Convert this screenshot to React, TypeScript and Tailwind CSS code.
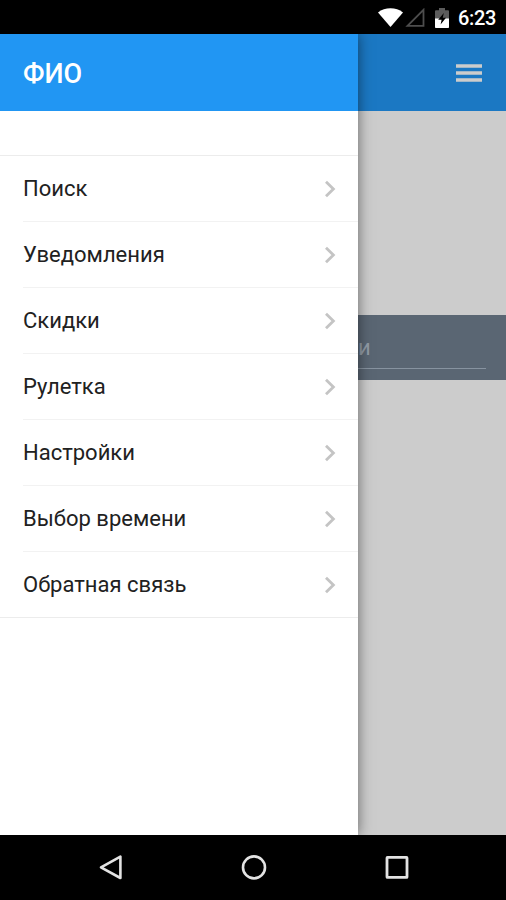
const menuItems = [
  "Поиск",
  "Уведомления",
  "Скидки",
  "Рулетка",
  "Настройки",
  "Выбор времени",
  "Обратная связь",
];

function StatusBar() {
  return (
    <div className="flex h-[34px] shrink-0 items-center justify-end bg-black pt-px pr-[10px] text-white">
      {/* Wi-Fi */}
      <svg width="25" height="19" viewBox="0 0 25 19" className="mr-[2px]" fill="currentColor">
        <path d="M0 4.4C7 -1.2 18 -1.2 25 4.4L12.5 19Z" />
      </svg>
      {/* No signal */}
      <svg width="20" height="20" viewBox="0 0 20 20" className="mr-[10px]" fill="none">
        <path d="M2.5 17.8H18.5V1.8Z" stroke="#4d4d4d" strokeWidth="1.8" />
      </svg>
      {/* Charging battery */}
      <svg width="14" height="20" viewBox="0 0 14 20" className="mr-[9px]">
        <path d="M4 0H10V2.3H13Q14 2.3 14 3.3V19Q14 20 13 20H1Q0 20 0 19V3.3Q0 2.3 1 2.3H4Z" fill="#5c5c5c" />
        <path d="M0 10.5H14V19Q14 20 13 20H1Q0 20 0 19Z" fill="white" />
        <path d="M8.8 5L3.2 11.8H6.6L5.6 16.5L11 9.8H7.8Z" fill="black" />
      </svg>
      <span className="w-[38px] text-[20px] leading-none font-medium tracking-[-0.3px] whitespace-nowrap">6:23</span>
    </div>
  );
}

function MenuItem({ label, last }: { label: string; last: boolean }) {
  return (
    <li className={last ? "" : "pl-[23px]"}>
      <div
        className={
          last
            ? "flex h-[66px] items-center justify-between border-b border-[#ececec] pr-[22px] pl-[23px]"
            : "flex h-[66px] items-center justify-between border-b border-[#f2f2f2] pr-[22px]"
        }
      >
        <span className="text-[22px] leading-none text-[#212121]">{label}</span>
        <svg width="12" height="18" viewBox="0 0 12 18" fill="none">
          <path d="M2 1.8L9.4 9L2 16.2" stroke="#c4c4c4" strokeWidth="2.8" />
        </svg>
      </div>
    </li>
  );
}

function Drawer() {
  return (
    <aside className="relative z-10 flex w-[358px] shrink-0 flex-col bg-white shadow-[0_0_13px_rgba(0,0,0,0.5)]">
      <header className="flex h-[77px] shrink-0 items-center bg-[#2196f3] pt-[3px] pl-[23px]">
        <h1 className="text-[27px] leading-none font-medium text-white">ФИО</h1>
      </header>
      <ul className="mt-[44px] border-t border-[#ececec]">
        {menuItems.map((label, i) => (
          <MenuItem key={label} label={label} last={i === menuItems.length - 1} />
        ))}
      </ul>
    </aside>
  );
}

/* Page behind the drawer, dimmed */
function Page() {
  return (
    <main className="flex min-w-0 flex-1 flex-col bg-[#cccccc]">
      <header className="flex h-[77px] shrink-0 items-center justify-end bg-[#1b78c3] pt-px pr-[24px]">
        <svg width="26" height="18" viewBox="0 0 26 18" fill="#cccccc">
          <path d="M0 0.3H26V3.7H0ZM0 7.3H26V10.7H0ZM0 14.3H26V17.7H0Z" />
        </svg>
      </header>
      <div className="mt-[204px] flex h-[65px] flex-col bg-[#5a6673] pr-[20px]">
        <div className="flex h-[54px] items-end border-b border-[#8793a0] pb-[9px]">
          <span className="text-[22px] leading-none text-[#919ba6]">и</span>
        </div>
      </div>
    </main>
  );
}

function NavigationBar() {
  return (
    <nav className="flex h-[65px] shrink-0 items-center bg-black pb-px pl-[98px]">
      <svg width="25" height="28" viewBox="0 0 25 28" fill="none" stroke="#e3e3e3" strokeWidth="2.6">
        <path d="M22.4 3.6V25L3 14.3Z" strokeLinejoin="round" />
      </svg>
      <svg width="26" height="26" viewBox="0 0 26 26" fill="none" stroke="#e3e3e3" strokeWidth="2.6" className="ml-[118px]">
        <circle cx="13" cy="13.4" r="11" />
      </svg>
      <svg width="24" height="24" viewBox="0 0 24 24" fill="none" stroke="#e3e3e3" strokeWidth="2.8" className="ml-[118px]">
        <rect x="2" y="2.4" width="20" height="20" rx="0.5" />
      </svg>
    </nav>
  );
}

export default function App() {
  return (
    <div className="flex h-[900px] w-[506px] flex-col overflow-hidden bg-black font-['Roboto',sans-serif]">
      <StatusBar />
      <div className="flex min-h-0 flex-1 overflow-hidden">
        <Drawer />
        <Page />
      </div>
      <NavigationBar />
    </div>
  );
}
